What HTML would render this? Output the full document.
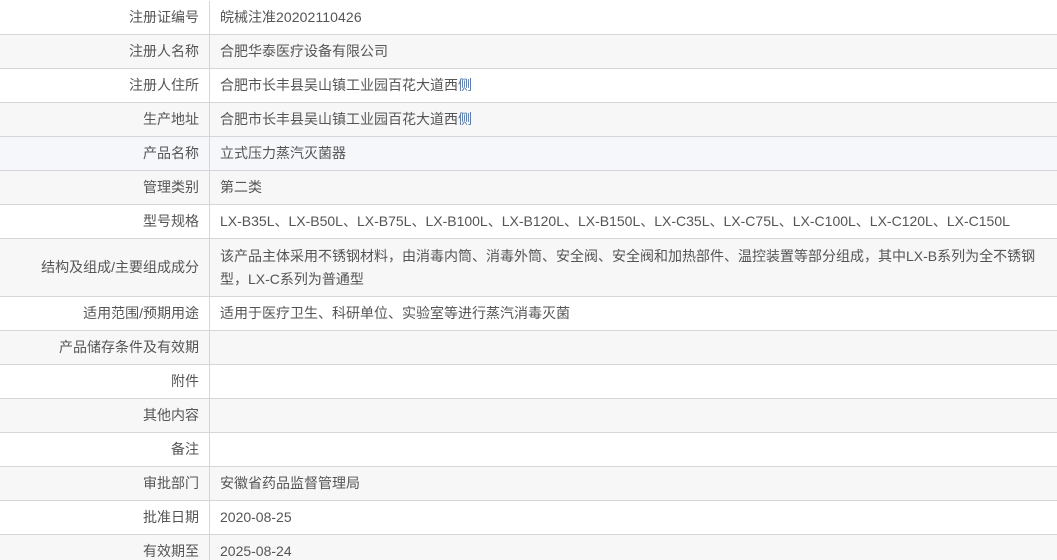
<!DOCTYPE html>
<html><head><meta charset="utf-8"><style>
html,body{margin:0;padding:0;background:#fff;width:1057px;height:560px;overflow:hidden}
table{border-collapse:collapse;width:1057px;font-family:"Liberation Sans","Noto Sans CJK SC",sans-serif;font-size:14px;color:#555;table-layout:fixed;margin-top:1px}
td{border-bottom:1px solid #d6d6d6;height:33px;padding:0;line-height:23px;vertical-align:middle}
td.l{width:199px;text-align:right;padding-right:10px;border-right:1px solid #d6d6d6}
td.v{padding-left:10px;padding-right:10px}
tr.g td{background:#f7f7f7}
tr.b td{background:#f5f7fa}
tr.tall td{height:57px}
.bl{color:#4a6fa5}
.n{letter-spacing:0.1px}
</style></head><body>
<table>
<tr><td class="l">注册证编号</td><td class="v">皖械注准<span class="n">20202110426</span></td></tr>
<tr class="g"><td class="l">注册人名称</td><td class="v">合肥华泰医疗设备有限公司</td></tr>
<tr><td class="l">注册人住所</td><td class="v">合肥市长丰县吴山镇工业园百花大道西<span class="bl">侧</span></td></tr>
<tr class="g"><td class="l">生产地址</td><td class="v">合肥市长丰县吴山镇工业园百花大道西<span class="bl">侧</span></td></tr>
<tr class="b"><td class="l">产品名称</td><td class="v">立式压力蒸汽灭菌器</td></tr>
<tr class="g"><td class="l">管理类别</td><td class="v">第二类</td></tr>
<tr><td class="l">型号规格</td><td class="v">LX-B35L、LX-B50L、LX-B75L、LX-B100L、LX-B120L、LX-B150L、LX-C35L、LX-C75L、LX-C100L、LX-C120L、LX-C150L</td></tr>
<tr class="g tall"><td class="l">结构及组成/主要组成成分</td><td class="v">该产品主体采用不锈钢材料，由消毒内筒、消毒外筒、安全阀、安全阀和加热部件、温控装置等部分组成，其中LX-B系列为全不锈钢型，LX-C系列为普通型</td></tr>
<tr><td class="l">适用范围/预期用途</td><td class="v">适用于医疗卫生、科研单位、实验室等进行蒸汽消毒灭菌</td></tr>
<tr class="g"><td class="l">产品储存条件及有效期</td><td class="v"></td></tr>
<tr><td class="l">附件</td><td class="v"></td></tr>
<tr class="g"><td class="l">其他内容</td><td class="v"></td></tr>
<tr><td class="l">备注</td><td class="v"></td></tr>
<tr class="g"><td class="l">审批部门</td><td class="v">安徽省药品监督管理局</td></tr>
<tr><td class="l">批准日期</td><td class="v">2020-08-25</td></tr>
<tr class="g"><td class="l">有效期至</td><td class="v">2025-08-24</td></tr>
</table>
</body></html>
